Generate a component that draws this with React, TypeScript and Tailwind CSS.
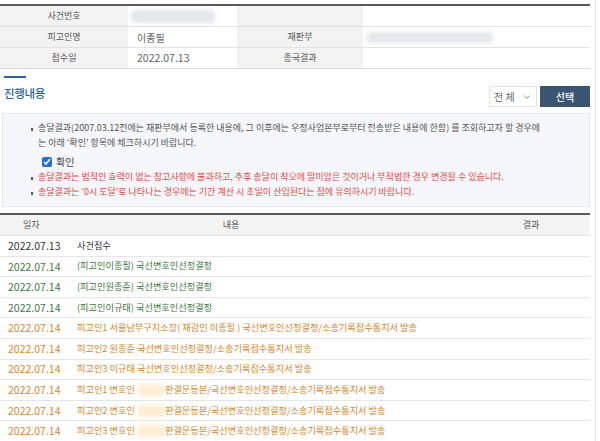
import { ChevronDown } from "lucide-react";

const font = { fontFamily: '"Noto Sans CJK KR", "Noto Sans", sans-serif' };

type Row = { date: string; text: React.ReactNode; tone: "black" | "green" | "orange" };

const Blur = ({ className }: { className: string }) => (
  <span className={`inline-block rounded-sm blur-[2px] ${className}`} />
);

const lawyer = (n: number) => (
  <>
    피고인{n} 변호인&nbsp;<Blur className="h-[12px] w-[28px] bg-orange-100" />
    판결문등본/국선변호인선정결정/소송기록접수통지서 발송
  </>
);

const rows: Row[] = [
  { date: "2022.07.13", text: "사건접수", tone: "black" },
  { date: "2022.07.14", text: "(피고인이종필) 국선변호인선정결정", tone: "green" },
  { date: "2022.07.14", text: "(피고인원종준) 국선변호인선정결정", tone: "green" },
  { date: "2022.07.14", text: "(피고인이규태) 국선변호인선정결정", tone: "green" },
  { date: "2022.07.14", text: "피고인1 서울남부구치소장( 재감인 이종필 ) 국선변호인선정결정/소송기록접수통지서 발송", tone: "orange" },
  { date: "2022.07.14", text: "피고인2 원종준 국선변호인선정결정/소송기록접수통지서 발송", tone: "orange" },
  { date: "2022.07.14", text: "피고인3 이규태 국선변호인선정결정/소송기록접수통지서 발송", tone: "orange" },
  { date: "2022.07.14", text: lawyer(1), tone: "orange" },
  { date: "2022.07.14", text: lawyer(2), tone: "orange" },
  { date: "2022.07.14", text: lawyer(3), tone: "orange" },
];

const toneClass = {
  black: "text-[#333]",
  green: "text-[#3f7a3f]",
  orange: "text-[#d8882c]",
};

function Bullet() {
  return <span className="mt-[8px] mr-[5px] h-[3px] w-[2px] shrink-0 bg-[#555]" />;
}

export default function App() {
  return (
    <div className="flex h-[441px] w-[600px] overflow-hidden bg-white text-[9px] text-[#555]" style={font}>
      <div className="w-[590px] pt-[4px]">
        {/* case info */}
        <div className="border-t-2 border-[#5a5a5a]">
          <div className="flex h-[21px] border-b border-[#e3e3e3]">
            <div className="flex w-[128px] items-center justify-center bg-[#f3f3f3]">사건번호</div>
            <div className="flex w-[109px] items-center pl-[3px]">
              <Blur className="h-[13px] w-[84px] bg-gray-200" />
            </div>
            <div className="w-[126px] bg-[#f3f3f3]" />
            <div className="flex-1" />
          </div>
          <div className="flex h-[21px] border-b border-[#e3e3e3]">
            <div className="flex w-[128px] items-center justify-center bg-[#f3f3f3]">피고인명</div>
            <div className="flex w-[109px] items-center pl-[9px] text-[10px] text-[#666]">이종필</div>
            <div className="flex w-[126px] items-center justify-center bg-[#f3f3f3]">재판부</div>
            <div className="flex flex-1 items-center pl-[4px]">
              <Blur className="h-[11px] w-[126px] bg-gray-200" />
            </div>
          </div>
          <div className="flex h-[21px] border-b border-[#d8d8d8]">
            <div className="flex w-[128px] items-center justify-center bg-[#f3f3f3]">접수일</div>
            <div className="flex w-[109px] items-center pl-[9px] text-[10.5px] text-[#666]">2022.07.13</div>
            <div className="flex w-[126px] items-center justify-center bg-[#f3f3f3]">종국결과</div>
            <div className="flex-1" />
          </div>
        </div>

        {/* section title */}
        <div className="mt-[7px] flex items-start justify-between pl-[4px]">
          <div>
            <div className="h-[2px] w-[22px] bg-[#2a63a8]" />
            <div className="mt-[7px] text-[11.5px] font-medium leading-[16px] tracking-[-0.3px] text-[#2a63a8]">
              진행내용
            </div>
          </div>
          <div className="mt-[10px] flex gap-[3px] text-[10px]">
            <div className="flex h-[21px] w-[48px] items-center justify-between border border-[#e2e2e2] pr-[4px] pl-[4px] text-[#666]">
              <span>전 체</span>
              <ChevronDown className="h-[10px] w-[10px] text-[#777]" strokeWidth={2} />
            </div>
            <div className="flex h-[21px] w-[50px] items-center justify-center bg-[#3b5570] font-medium text-white">
              선택
            </div>
          </div>
        </div>

        {/* notice */}
        <div className="mt-[6px] ml-[2px] border border-[#e6e8ee] bg-[#f6f7fb] pt-[6px] pr-[8px] pb-[7px] pl-[28px] leading-[15px]">
          <div className="flex">
            <Bullet />
            <span>
              송달결과(2007.03.12전에는 재판부에서 등록한 내용에, 그 이후에는 우정사업본부로부터 전송받은 내용에 한함) 를 조회하고자 할 경우에
              <br />
              는 아래 ‘확인’ 항목에 체크하시기 바랍니다.
            </span>
          </div>
          <div className="mt-[4px] flex h-[15px] items-center gap-[4px] pl-[11px]">
            <input type="checkbox" checked readOnly className="h-[10px] w-[10px] accent-[#1f6fd6]" />
            <span className="text-[10px] text-[#444]">확인</span>
          </div>
          <div className="flex text-[#e8473f]">
            <Bullet />
            <span>송달결과는 법적인 효력이 없는 참고사항에 불과하고, 추후 송달이 착오에 말미암은 것이거나 부적법한 경우 변경될 수 있습니다.</span>
          </div>
          <div className="flex text-[#e8473f]">
            <Bullet />
            <span>송달결과는 ‘0시 도달’로 나타나는 경우에는 기간 계산 시 초일이 산입된다는 점에 유의하시기 바랍니다.</span>
          </div>
        </div>

        {/* history table */}
        <div className="mt-[6px] border-t-2 border-[#5a5a5a]">
          <div className="flex h-[21px] items-center border-b border-[#e3e3e3] bg-[#f3f3f3]">
            <div className="w-[72px] pl-[23px]">일자</div>
            <div className="flex-1 pr-[100px] text-center">내용</div>
            <div className="w-[100px] pr-[18px] text-center">결과</div>
          </div>
          {rows.map((r, i) => (
            <div
              key={i}
              className={`flex h-[20.6px] items-center border-b border-[#e6e6e6] text-[10.5px] ${toneClass[r.tone]}`}
            >
              <div className="w-[77px] pl-[8px]">{r.date}</div>
              <div className="flex flex-1 items-center whitespace-nowrap text-[9.2px]">{r.text}</div>
            </div>
          ))}
        </div>
      </div>
      <div className="ml-[5px] w-px bg-[#e2e2e2]" />
    </div>
  );
}
